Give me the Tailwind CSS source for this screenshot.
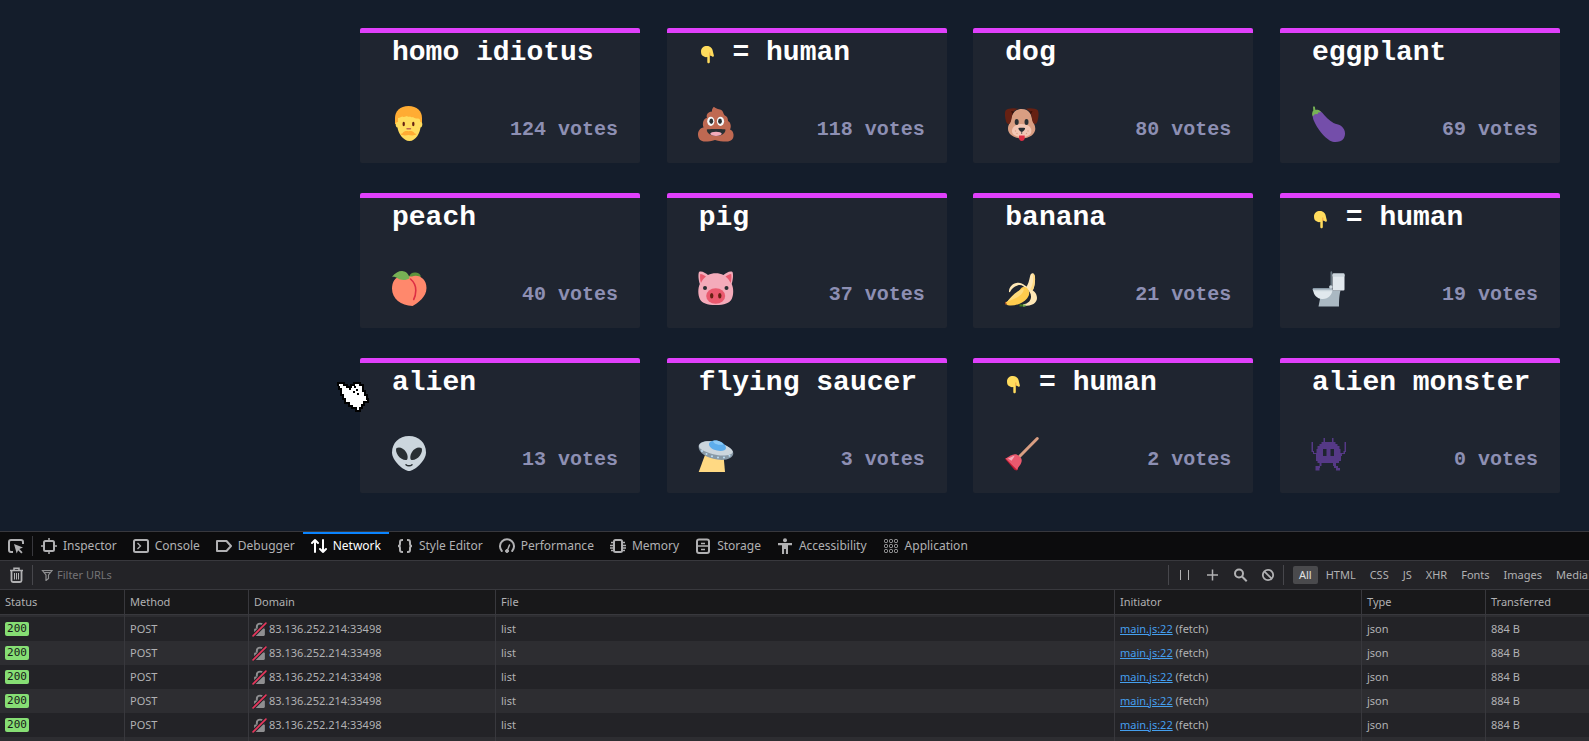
<!DOCTYPE html>
<html lang="en">
<head>
<meta charset="utf-8">
<title>Votes</title>
<script src="https://cdn.jsdelivr.net/npm/@tailwindcss/browser@4"></script>
</head>
<body class="flex h-screen flex-col overflow-hidden bg-[#141d2b] font-['Noto_Sans',sans-serif]">
<svg class="hidden" aria-hidden="true">
  <symbol id="point" viewBox="0 0 17 18" overflow="visible">
    <path fill="#ffdc5d" d="M8 0C4.500 0 2 2 2 5.500c0 2.500.7 4.500 3 5 .8.700 2 .8 3.300.6V16c0 1.700 2.500 1.700 2.500 0V9.500l1.700.4c.6 1.300 2.500 1 2.400-.5L14 6c-.4-3.500-2.500-6-6-6z"/>
    <path fill="none" stroke="#ef9645" stroke-width=".8" d="M10.800 10V6.500"/>
  </symbol>
  <symbol id="lock" viewBox="0 0 14 14">
    <path d="M4.500 6V4.500a3 3 0 0 1 6 0V6" fill="none" stroke="#8f8f91" stroke-width="1.800"/>
    <rect x="2" y="6" width="10" height="7" rx="1" fill="#8f8f91"/>
    <path d="M1 13 13 1" stroke="#232327" stroke-width="3.500"/>
    <path d="M1 13 13 1" stroke="#e8365c" stroke-width="1.500" stroke-linecap="round"/>
  </symbol>
</svg>

<main class="min-h-0 flex-1 overflow-hidden pt-7 pr-[29px]">
  <div class="relative ml-auto grid w-full max-w-[1200px] grid-cols-[repeat(4,280px)] justify-between gap-y-[30px] font-['Liberation_Mono',monospace]">

    <article class="flex h-[135px] flex-col justify-between rounded-xs border-t-[5px] border-[#e040fb] bg-[#1f2530] pt-1 pr-[22px] pb-[21px] pl-8">
      <h2 class="text-[28px] leading-8 font-bold whitespace-nowrap text-white">homo idiotus</h2>
      <div class="flex items-end justify-between">
        <svg class="size-9 overflow-visible" viewBox="0 0 36 36">
          <path fill="#ffac33" d="M16.500 0C8 0 3 5 3 12v6h27v-6C30 5 25 0 16.500 0z"/>
          <path fill="#ffdc5d" d="M6 12c2-.5 3-1 4-1.500 2 1 4 0 5-.5 1 1 2 1 3 .5 1 1 2 .7 3 .5 1 1 3 1.500 5 1.500 1.500 0 2.300 1 2.300 3.500 2.700-.5 2.700 5 .2 5.500-.5 5-4.500 13.500-11 13.500S6 26.500 5.500 21.500C3 21 3 15.500 6 16z"/>
          <ellipse cx="11.700" cy="18" rx="1.200" ry="2.200" fill="#662113"/><ellipse cx="21.300" cy="18" rx="1.200" ry="2.200" fill="#662113"/>
          <path d="M15 22.700h3.500" stroke="#c1694f" stroke-width="1.400" stroke-linecap="round"/>
          <path fill="#ffac33" d="M16.500 25.300c1-.8 5-.5 5.500 1.200.4 1 1.700 1.300 2.500 1.600-1.500 1.600-5 1.700-8 .9-3 .8-6.500.7-8-.9.8-.3 2.100-.6 2.500-1.600.5-1.700 4.500-2 5.500-1.200z"/>
        </svg>
        <span class="mb-[2px] text-xl leading-5 font-bold text-[#8d8fb3]">124 votes</span>
      </div>
    </article>

    <article class="flex h-[135px] flex-col justify-between rounded-xs border-t-[5px] border-[#e040fb] bg-[#1f2530] pt-1 pr-[22px] pb-[21px] pl-8">
      <h2 class="flex items-center text-[28px] leading-8 font-bold whitespace-pre text-white"><svg class="mt-1 h-[18px] w-[17px]"><use href="#point"/></svg> = human</h2>
      <div class="flex items-end justify-between">
        <svg class="size-9 overflow-visible" viewBox="0 0 36 36">
          <path fill="#bf6952" d="M31 23.500c1.500-2.500 1-7-2-8.500 0-3-1-4.500-2.700-5.200C24 9 25 4.500 21 3.500 18 3 15.500 1.500 15 .7c-1 1-2.500 2.500-2 4.800C8.500 6 7 9 8 12c-3.500.5-5 5-3.500 9.500C1 22-1 25-1 28.500-1 33 2 35.500 6 35.500c4 0 6 0 10-1.500 4 1.500 7 1.500 11.500 1.500S35 33 34.500 28.500c-.2-2.500-1.500-4.500-3.500-5z"/>
          <ellipse cx="11.800" cy="15.300" rx="3.600" ry="4.600" fill="#f5f8fa"/><ellipse cx="21.500" cy="15.300" rx="3.600" ry="4.600" fill="#f5f8fa"/>
          <ellipse cx="12.300" cy="15.300" rx="1.900" ry="2.700" fill="#292f33"/><ellipse cx="21" cy="15.300" rx="1.900" ry="2.700" fill="#292f33"/>
          <path fill="#292f33" d="M7.800 23.500c0-.7 18.700-.7 18.700 0 0 4-4 6.500-9.200 6.500s-9.500-2.500-9.500-6.500z"/>
          <ellipse cx="17" cy="27.800" rx="5.700" ry="2.100" fill="#f4abba"/>
        </svg>
        <span class="mb-[2px] text-xl leading-5 font-bold text-[#8d8fb3]">118 votes</span>
      </div>
    </article>

    <article class="flex h-[135px] flex-col justify-between rounded-xs border-t-[5px] border-[#e040fb] bg-[#1f2530] pt-1 pr-[22px] pb-[21px] pl-8">
      <h2 class="text-[28px] leading-8 font-bold whitespace-nowrap text-white">dog</h2>
      <div class="flex items-end justify-between">
        <svg class="size-9 overflow-visible" viewBox="0 0 36 36">
          <path fill="#d99e82" d="M16.700 3C9 3 7 9 5.500 15c-1 3-2.500 4-2.500 8 0 5 6 9.500 13.700 9.500S30.300 28 30.300 23c0-4-1.500-5-2.500-8C26.500 9 24.500 3 16.700 3z"/>
          <path fill="#f2c6b4" d="M16.700 18c-6 0-9.700 3-9.700 7s4.500 6 9.700 6 9.700-2 9.700-6-3.500-7-9.700-7z"/>
          <path fill="#662113" d="M13 2.700C8 1.500 3 2.300 1 4-.7 6 0 11 .7 14c.7 3.500 2.300 5 4 3.500C7 15 6.500 10 8 6.500c1-2 3-3 5-3.800zM20.500 2.700c5-1.200 10-.4 12 1.300 1.700 2 1 7 .3 10-.7 3.500-2.300 5-4 3.500-2.300-2.500-1.800-7.500-3.300-11-1-2-3-3-5-3.800z"/>
          <path fill="#3b0f08" d="M6 5l3 .5L7.500 8zM27.500 5l-3 .5L26 8z"/>
          <ellipse cx="11.700" cy="16" rx="2" ry="3" fill="#292f33"/><ellipse cx="21.500" cy="16" rx="2" ry="3" fill="#292f33"/>
          <path fill="#292f33" d="M13.500 22c1.500-.5 5-.5 6.500 0 .5 1.500-2 3.800-3.300 3.800S13 23.500 13.500 22z"/>
          <path fill="#dd2e44" d="M14 29.500h5.700V32c0 4-5.700 4-5.700 0z"/><path d="M16.700 25v3" stroke="#292f33" stroke-width=".7"/>
          <g fill="#d99e82"><circle cx="10.500" cy="25" r=".7"/><circle cx="12" cy="27.500" r=".7"/><circle cx="23" cy="25" r=".7"/><circle cx="21.500" cy="27.500" r=".7"/></g>
        </svg>
        <span class="mb-[2px] text-xl leading-5 font-bold text-[#8d8fb3]">80 votes</span>
      </div>
    </article>

    <article class="flex h-[135px] flex-col justify-between rounded-xs border-t-[5px] border-[#e040fb] bg-[#1f2530] pt-1 pr-[22px] pb-[21px] pl-8">
      <h2 class="text-[28px] leading-8 font-bold whitespace-nowrap text-white">eggplant</h2>
      <div class="flex items-end justify-between">
        <svg class="size-9 overflow-visible" viewBox="0 0 36 36">
          <path fill="#744eaa" d="M3 5.500C0 8 .5 12 2 15c3.500 8 10 16 16 19.700 4.500 2.500 11 1.300 13.500-2 3-4 1.500-10.500-3-13.200-2-1.300-4.500-1-7-2.500C17 14.500 13 10 10.500 7 8.500 4.500 5.500 3.500 3 5.500z"/>
          <path fill="#77b255" d="M1 .8c1-.8 2.200-.3 2 .7l.3 2.300c2-.3 4.500 0 5.700 2.200-1 .5-1.800.5-2.500.3C6 8 5 8.700 4.500 8 3 7.800 2.300 8.500.7 10.500-.5 8.500.3 5.500 1.300 4.500z"/>
        </svg>
        <span class="mb-[2px] text-xl leading-5 font-bold text-[#8d8fb3]">69 votes</span>
      </div>
    </article>

    <article class="flex h-[135px] flex-col justify-between rounded-xs border-t-[5px] border-[#e040fb] bg-[#1f2530] pt-1 pr-[22px] pb-[21px] pl-8">
      <h2 class="text-[28px] leading-8 font-bold whitespace-nowrap text-white">peach</h2>
      <div class="flex items-end justify-between">
        <svg class="size-9 overflow-visible" viewBox="0 0 36 36">
          <path fill="#5c913b" d="M17 6c1-4 4-5 7-4.500 3 .3 4 2 5 4l-5 2z"/>
          <path fill="#ff886c" d="M20 5.500c7-2.500 14.500 2.500 14.500 11.500C34.500 26 26 32 20.500 35 9 34.500 0 28 0 17.500 0 11 3 6 9 5.200c4-.6 8 .2 11 .3z"/>
          <path fill="none" stroke="#dd2e44" stroke-width="1.600" stroke-linecap="round" d="M18.500 8c3.500 3 5.500 7 5.300 11.500-.1 3.500-1 7-2.100 9"/>
          <path fill="#77b255" d="M0 5.800C3.500 1.500 7.500-.3 11 .2c4 .5 6 3.500 6.500 7C14.500 9.500 9 9.500 6 7.500 4 6 2 5.500 0 5.800z"/>
        </svg>
        <span class="mb-[2px] text-xl leading-5 font-bold text-[#8d8fb3]">40 votes</span>
      </div>
    </article>

    <article class="flex h-[135px] flex-col justify-between rounded-xs border-t-[5px] border-[#e040fb] bg-[#1f2530] pt-1 pr-[22px] pb-[21px] pl-8">
      <h2 class="text-[28px] leading-8 font-bold whitespace-nowrap text-white">pig</h2>
      <div class="flex items-end justify-between">
        <svg class="size-9 overflow-visible" viewBox="0 0 36 36">
          <path fill="#f4abba" d="M0 1C2.500-.5 6.500 2 9 4c4.500-2.500 11-2.500 15.500 0C27 2 31-.5 33.500 1c1 2.500.5 8-.8 12 2 4 2 11 0 15-2.200 4-7.200 6-16 6S3 32 .8 28c-2-4-2-11 0-15C-.5 9-1 3.500 0 1z"/>
          <path fill="#ea596e" d="M1.300 3C3.500 3 5.500 4.500 7 5.500 4.500 7.500 3 9.500 2 12 1 9 .8 5.500 1.300 3zM32.200 3c-2.200 0-4.200 1.500-5.700 2.500 2.500 2 4 4 5 6.500 1-3 1.200-6.500.7-9z"/>
          <circle cx="6" cy="17" r="2" fill="#292f33"/><circle cx="27.500" cy="17" r="2" fill="#292f33"/>
          <ellipse cx="16.700" cy="25" rx="9.500" ry="7.700" fill="#ea596e"/>
          <ellipse cx="12.700" cy="24.700" rx="1.700" ry="2.700" fill="#662113"/><ellipse cx="20.800" cy="24.700" rx="1.700" ry="2.700" fill="#662113"/>
        </svg>
        <span class="mb-[2px] text-xl leading-5 font-bold text-[#8d8fb3]">37 votes</span>
      </div>
    </article>

    <article class="flex h-[135px] flex-col justify-between rounded-xs border-t-[5px] border-[#e040fb] bg-[#1f2530] pt-1 pr-[22px] pb-[21px] pl-8">
      <h2 class="text-[28px] leading-8 font-bold whitespace-nowrap text-white">banana</h2>
      <div class="flex items-end justify-between">
        <svg class="size-9 overflow-visible" viewBox="0 0 36 36">
          <path fill="#ffe8b6" d="M20.500 17c3-3.500 3.500-7.500 4.500-11.500.5-2.500 1.500-3.500 3-3.300C30.500 3 30.500 9 29.500 14c-.5 3-1.500 5-3 7z"/>
          <path fill="#ffd983" d="M27.500 2.500C30.500 3 30.500 9 29.500 14c-.5 3-1.500 5-3 7l-2-1.500C28 14.500 29 8 27.500 2.500z"/>
          <path fill="#ffe8b6" d="M21 18c-2-3-5-5-8.500-3.500C9 15.500 6.500 18 5 21l-1 .3c-.5-5 4-9.800 9.500-9.500 4.500.3 8.500 4 10 6.200 4.500.5 8.500 4 8.500 9 0 5-5 8-13 8l-1-1.500c5.500-1 8-4 8-8 0-3.500-2-6-5.500-8z"/>
          <path fill="#ffcc4d" d="M21.500 16.500c3 2.500 4 7 .5 11-4 5-12 7.500-17.500 7-2.500-.2-4.200-1.500-4-3C4 29 8 27 11.500 23.500c3-2.500 4-8 7.500-7.500z"/>
          <path fill="#ffdc7d" d="M18.500 17.500c1 3-3 7.500-7.500 9.500-3 1.500-6.500 2.500-9 4 4-5.500 9.500-11 16.500-13.500z"/>
          <path fill="#a6502e" d="M.3 30.500l1.500 2.500-1 1C0 33-.3 31.500.3 30.500z"/><path fill="#3e721d" d="M14.500 33.200l3.500.3v2h-3.500z"/><path fill="#77b255" d="M18 33.500l3 .3-.5 1.700-2.500.2z"/>
        </svg>
        <span class="mb-[2px] text-xl leading-5 font-bold text-[#8d8fb3]">21 votes</span>
      </div>
    </article>

    <article class="flex h-[135px] flex-col justify-between rounded-xs border-t-[5px] border-[#e040fb] bg-[#1f2530] pt-1 pr-[22px] pb-[21px] pl-8">
      <h2 class="flex items-center text-[28px] leading-8 font-bold whitespace-pre text-white"><svg class="mt-1 h-[18px] w-[17px]"><use href="#point"/></svg> = human</h2>
      <div class="flex items-end justify-between">
        <svg class="size-9 overflow-visible" viewBox="0 0 36 36">
          <path fill="#66757f" d="M18.500 1c0-1 1.700-1 1.700 0v16h-1.700z"/>
          <path fill="#aab8c2" d="M20 19.500h8.500c-1 4-1.500 8-1.500 16H6.500l1.800-9z"/>
          <rect x="20.500" y="3.500" width="12" height="16" rx="1" fill="#e1e8ed"/><rect x="20.500" y="2.300" width="12" height="3.500" rx="1" fill="#ccd6dd"/>
          <path fill="#e1e8ed" d="M1.200 19H20c1 4-4 9.500-10 9C5 27.700 1.500 24 1.200 19z"/>
          <path fill="#8899a6" d="M1.500 17H20v2H.8c-.5-1 0-2 .7-2z"/><path fill="#ccd6dd" d="M.7 18.500h20v1.700H1.200z"/>
          <circle cx="18.800" cy="16" r="1.700" fill="#ccd6dd"/>
        </svg>
        <span class="mb-[2px] text-xl leading-5 font-bold text-[#8d8fb3]">19 votes</span>
      </div>
    </article>

    <article class="flex h-[135px] flex-col justify-between rounded-xs border-t-[5px] border-[#e040fb] bg-[#1f2530] pt-1 pr-[22px] pb-[21px] pl-8">
      <h2 class="text-[28px] leading-8 font-bold whitespace-nowrap text-white">alien</h2>
      <div class="flex items-end justify-between">
        <svg class="size-9 overflow-visible" viewBox="0 0 36 36">
          <path fill="#ccd6dd" d="M17 0C7 0 0 7 0 16.500 0 25 12 35 17 35s17-10 17-18.500C34 7 27 0 17 0z"/>
          <path fill="#292f33" d="M4.500 12c3-1.500 7 0 9.500 4 2 3 2 6.500 1 7.700-2.500.8-6.500-.7-9-4.200-2-3-2.500-6-1.500-7.500zM29.500 12c-3-1.500-7 0-9.500 4-2 3-2 6.500-1 7.700 2.500.8 6.500-.7 9-4.200 2-3 2.500-6 1.500-7.500z"/>
          <path fill="none" stroke="#292f33" stroke-width="1.500" stroke-linecap="round" d="M14 28.700c1.500 1.500 4.500 1.500 6 0"/>
        </svg>
        <span class="mb-[2px] text-xl leading-5 font-bold text-[#8d8fb3]">13 votes</span>
      </div>
    </article>

    <article class="flex h-[135px] flex-col justify-between rounded-xs border-t-[5px] border-[#e040fb] bg-[#1f2530] pt-1 pr-[22px] pb-[21px] pl-8">
      <h2 class="text-[28px] leading-8 font-bold whitespace-nowrap text-white">flying saucer</h2>
      <div class="flex items-end justify-between">
        <svg class="size-9 overflow-visible" viewBox="0 0 36 36">
          <path fill="#ffd983" d="M6 19h18.500L26 36H-.3z"/>
          <path fill="#8899a6" d="M-.4 10C0 6 7 4 15 5.500S34 12 34.300 17c.2 5-7 8-16 6.500C8 22-1 17-.4 10z"/>
          <path fill="#ccd6dd" d="M0 10C.5 6 7.500 4.300 15.500 5.700S33.500 12 33.800 15.500C34 19 26 20.500 18 19 8 17-.5 13 0 10z"/>
          <path fill="#5dadec" d="M10 7.500c1-2.500 5-3.500 9-2.500 4.500 1 8 4 8 7 0 2.500-4.500 3.500-9 2.500-5-1-8.500-4-8-7z"/><path fill="#8ccaf7" d="M14 5c4-1.500 9 1 10.500 3.500C21 9.500 15 8.500 14 5z"/>
          <g fill="#bbddf5"><circle cx="3" cy="15" r="1"/><circle cx="7.500" cy="18" r="1"/><circle cx="13" cy="20.300" r="1"/><circle cx="19" cy="21.500" r="1"/><circle cx="25" cy="21.500" r="1"/><circle cx="30.500" cy="19.700" r="1"/></g>
        </svg>
        <span class="mb-[2px] text-xl leading-5 font-bold text-[#8d8fb3]">3 votes</span>
      </div>
    </article>

    <article class="flex h-[135px] flex-col justify-between rounded-xs border-t-[5px] border-[#e040fb] bg-[#1f2530] pt-1 pr-[22px] pb-[21px] pl-8">
      <h2 class="flex items-center text-[28px] leading-8 font-bold whitespace-pre text-white"><svg class="mt-1 h-[18px] w-[17px]"><use href="#point"/></svg> = human</h2>
      <div class="flex items-end justify-between">
        <svg class="size-9 overflow-visible" viewBox="0 0 36 36">
          <path stroke="#d99e82" stroke-width="3" stroke-linecap="round" d="M14.500 20.500 32.300 2.500"/>
          <path fill="#be1931" d="M0 22.800 1.500 22 13 32.500 12 34.500 9.700 34z"/>
          <path fill="#ea596e" d="M.5 22.500C4 21 5 19 9 18.500c1.500-.7 3 0 4 .8l3 2.700c1 1.500.7 2.700.5 4-.8 3.500-3.500 4.500-4.300 8z"/>
          <path fill="#f4abba" d="M3 22.500c3-1 4-2.500 6.500-2.800-.5 1.500-1.500 3-3 5z"/>
        </svg>
        <span class="mb-[2px] text-xl leading-5 font-bold text-[#8d8fb3]">2 votes</span>
      </div>
    </article>

    <article class="flex h-[135px] flex-col justify-between rounded-xs border-t-[5px] border-[#e040fb] bg-[#1f2530] pt-1 pr-[22px] pb-[21px] pl-8">
      <h2 class="text-[28px] leading-8 font-bold whitespace-nowrap text-white">alien monster</h2>
      <div class="flex items-end justify-between">
        <svg class="size-9 overflow-visible" viewBox="0 0 36 36">
          <path fill="#553986" fill-rule="evenodd" d="M11.500 2H13v4h7V2h1.500v4h2v2h2v2h2v3h1v4h3v-2h1V6H34v10h-1v2h-3v2h-1v5h-2v2h-3v3h2v2h2v2.500h-4V32h-2v-2h-1.500v-3h-11v3H8v2h-.500v2.500h-4V30h4v-3h-2v-2h-1.500v-7h-3v-2h-1.500V6H1v9h1v2h2.500v-4h1v-3h2V8h2V6h2zM11 13h3.500v7H11zM18.500 13H22v7h-3.500z"/>
          <path fill="#1f2530" d="M12 27h9v3h-9z"/>
        </svg>
        <span class="mb-[2px] text-xl leading-5 font-bold text-[#8d8fb3]">0 votes</span>
      </div>
    </article>

    <svg class="absolute top-[353px] -left-[23px] h-[31px] w-8" viewBox="0 0 32 31" shape-rendering="crispEdges" aria-hidden="true">
      <path fill="#fff" stroke="#000" stroke-width="2" d="M1 2h6v2h3v2h4V4h3V2h6v2h3v6h2v4h2v4h1v3h-4v3h-2v3h-2v3h-4v-3h-4v-2h-3v-3H8v-4H6v-4H4V8H2z"/>
      <path fill="#000" d="M12 7h2v2h-2zM17 5h2v2h-2zM19 8h2v2h-2zM20 12h2v2h-2zM16 10h2v2h-2z"/>
    </svg>
  </div>
</main>

<section class="flex h-[210px] shrink-0 flex-col overflow-hidden border-t border-[#38383d] bg-[#232327] text-[#b1b1b3]">
  <nav class="flex h-7 shrink-0 box-content border-b border-[#38383d] bg-[#0c0c0d] text-xs">
    <button class="flex w-8 items-center justify-center" aria-label="Pick an element"><svg class="size-4" viewBox="0 0 16 16" fill="none" stroke="currentColor" stroke-width="2"><path d="M5 14H3a2 2 0 0 1-2-2V4a2 2 0 0 1 2-2h10a2 2 0 0 1 2 2v2"/><path d="M6 6l9 3.500-3.600 1.400 3.200 3.300-1.300 1.300-3.200-3.300L8.700 15.500z" fill="currentColor" stroke="none"/></svg></button>
    <span class="my-1 w-px bg-[#38383d]"></span>
    <button class="flex items-center gap-[6px] px-2"><svg class="size-4" viewBox="0 0 16 16" fill="none" stroke="currentColor"><rect x="3" y="3" width="10" height="10" rx="1.500" stroke-width="2"/><path d="M8 0v3M8 13v3M0 8h3M13 8h3" stroke-width="1.500"/></svg>Inspector</button>
    <button class="flex items-center gap-[6px] px-2"><svg class="size-4" viewBox="0 0 16 16" fill="none" stroke="currentColor"><rect x="1" y="2" width="14" height="12" rx="1.500" stroke-width="2"/><path d="M4.500 5 7.500 8l-3 3" stroke-width="1.300"/></svg>Console</button>
    <button class="flex items-center gap-[6px] px-2"><svg class="size-4" viewBox="0 0 16 16" fill="none" stroke="currentColor" stroke-width="2" stroke-linejoin="round"><path d="M1 3h9.500L15 8l-4.500 5H1z"/></svg>Debugger</button>
    <button class="flex items-center gap-[6px] px-2 text-white shadow-[inset_0_2px_#0a84ff]"><svg class="size-4" viewBox="0 0 16 16" fill="none" stroke="currentColor" stroke-width="2" stroke-linecap="round" stroke-linejoin="round"><path d="M4 14V2M1 5l3-3 3 3M12 2v12M9 11l3 3 3-3"/></svg>Network</button>
    <button class="flex items-center gap-[6px] px-2"><svg class="size-4" viewBox="0 0 16 16" fill="none" stroke="currentColor" stroke-width="2"><path d="M6 2H5C3.500 2 3 3 3 4v2c0 1-.7 2-2 2 1.300 0 2 1 2 2v2c0 1 .5 2 2 2h1M10 2h1c1.500 0 2 1 2 2v2c0 1 .7 2 2 2-1.300 0-2 1-2 2v2c0 1-.5 2-2 2h-1"/></svg>Style Editor</button>
    <button class="flex items-center gap-[6px] px-2"><svg class="size-4" viewBox="0 0 16 16" fill="none" stroke="currentColor" stroke-width="2" stroke-linecap="round"><path d="M2.800 13A7 7 0 1 1 13.200 13"/><path d="M8.300 12.500 10.500 7" stroke-width="1.500"/><circle cx="8" cy="13" r="1.500" fill="currentColor" stroke-width="1"/></svg>Performance</button>
    <button class="flex items-center gap-[6px] px-2"><svg class="size-4" viewBox="0 0 16 16" fill="none" stroke="currentColor"><rect x="4" y="2" width="8" height="12" rx="1.500" stroke-width="2"/><path d="M1 4.500h2.500M0 7.500h3M0 10h3M1 12.500h2.500M12.500 4.500H15M13 7.500h3M13 10h3M12.500 12.500H15" stroke-width="1.300"/></svg>Memory</button>
    <button class="flex items-center gap-[6px] px-2"><svg class="size-4" viewBox="0 0 16 16" fill="none" stroke="currentColor"><rect x="2" y="1.500" width="12" height="13.500" rx="2" stroke-width="2"/><path d="M2 8h12M6 5.500h4M6 11.500h4" stroke-width="1.300"/></svg>Storage</button>
    <button class="flex items-center gap-[6px] px-2"><svg class="size-4" viewBox="0 0 16 16" fill="currentColor"><circle cx="8" cy="2.200" r="2"/><path d="M1 5h14v2.200h-4V16H8.900v-5H7.100v5H5V7.200H1z"/></svg>Accessibility</button>
    <button class="flex items-center gap-[6px] px-2"><svg class="size-4" viewBox="0 0 16 16" fill="none" stroke="currentColor"><g id="dots"><rect x="1.500" y="1.500" width="3" height="3" rx="1"/><rect x="6.500" y="1.500" width="3" height="3" rx="1"/><rect x="11.500" y="1.500" width="3" height="3" rx="1"/></g><use href="#dots" y="5"/><use href="#dots" y="10"/></svg>Application</button>
  </nav>

  <div class="flex h-7 shrink-0 box-content border-b border-[#38383d] text-[11px]">
    <button class="flex w-8 items-center justify-center" aria-label="Clear"><svg class="size-4" viewBox="0 0 16 16" fill="none" stroke="currentColor"><path d="M3.500 4v9.500c0 1 .7 1.500 1.500 1.500h7c.8 0 1.500-.5 1.500-1.500V4" stroke-width="1.800"/><path d="M2 3.500h13M6 3V1.200h5V3" stroke-width="1.500"/><path d="M6.500 6v6.500M8.500 6v6.500M10.500 6v6.500"/></svg></button>
    <span class="my-1 w-px bg-[#47474c]"></span>
    <label class="flex min-w-0 flex-1 items-center gap-1 pl-2"><svg class="size-3" viewBox="0 0 12 12" fill="none" stroke="#8f8f91" stroke-width="1.200"><path d="M1.500 1.500h9.500L7.500 6v3.500l-2.500 2V6z"/><path d="M3 3.500h6"/></svg><input class="min-w-0 flex-1 bg-transparent outline-none placeholder:text-[#737376]" placeholder="Filter URLs" aria-label="Filter URLs"></label>
    <div class="flex border-x border-[#47474c] my-1 px-px">
      <button class="flex w-7 items-center justify-center" aria-label="Pause"><svg class="size-4" viewBox="0 0 16 16" stroke="currentColor"><path d="M4.500 3v10M12.500 3v10"/></svg></button>
      <button class="flex w-7 items-center justify-center" aria-label="New request"><svg class="size-4" viewBox="0 0 16 16" stroke="currentColor" stroke-width="1.500"><path d="M8.500 2.500v11M3 8h11"/></svg></button>
      <button class="flex w-7 items-center justify-center" aria-label="Search"><svg class="size-4" viewBox="0 0 16 16" fill="none" stroke="currentColor" stroke-width="2"><circle cx="7" cy="6.500" r="4"/><path d="M10 9.500l4.700 4.700"/></svg></button>
      <button class="flex w-7 items-center justify-center" aria-label="Block"><svg class="size-4" viewBox="0 0 16 16" fill="none" stroke="currentColor" stroke-width="1.800"><circle cx="8" cy="8" r="5.200"/><path d="M4.300 4.300l7.400 7.400"/></svg></button>
    </div>
    <div class="-mr-[5px] ml-[9px] flex items-center gap-[2px]">
      <button class="h-[18px] rounded-xs bg-[#4a4a4d] px-[6px] text-[#e0e0e2]">All</button>
      <button class="h-[18px] px-[6px]">HTML</button>
      <button class="h-[18px] px-[6px]">CSS</button>
      <button class="h-[18px] px-[6px]">JS</button>
      <button class="h-[18px] px-[6px]">XHR</button>
      <button class="h-[18px] px-[6px]">Fonts</button>
      <button class="h-[18px] px-[6px]">Images</button>
      <button class="h-[18px] px-[6px]">Media</button>
    </div>
  </div>

  <div class="min-h-0 flex-1 overflow-hidden">
    <table class="w-full table-fixed border-separate border-spacing-0 text-left text-[11px] whitespace-nowrap [&_td:not(:last-child)]:border-r [&_td]:border-[#38383d] [&_td]:px-[5px] [&_td]:py-0 [&_th:not(:last-child)]:border-r [&_th]:border-b [&_th]:border-[#38383d] [&_th]:px-[5px] [&_th]:font-normal">
      <thead><tr class="h-[25px] bg-[#18181a]"><th class="w-[125px]">Status</th><th class="w-[124px]">Method</th><th class="w-[247px]">Domain</th><th>File</th><th class="w-[247px]">Initiator</th><th class="w-[124px]">Type</th><th class="w-[103px]">Transferred</th></tr></thead>
      <tbody>
        <tr class="h-[2px] bg-[#2d2d31]" aria-hidden="true"><td></td><td></td><td></td><td></td><td></td><td></td><td></td></tr>
        <tr class="h-6"><td><span class="block h-[14px] w-6 rounded-xs bg-[#86de74] text-center font-['DejaVu_Sans_Mono',monospace] leading-[14px] text-[#18181a]">200</span></td><td>POST</td><td><span class="flex items-center gap-[2px]"><svg class="-ml-[2px] size-[15px]"><use href="#lock"/></svg>83.136.252.214:33498</span></td><td>list</td><td><a href="#" class="text-[#459fee] underline">main.js:22</a> (fetch)</td><td>json</td><td>884 B</td></tr>
        <tr class="h-6 bg-[#2d2d31]"><td><span class="block h-[14px] w-6 rounded-xs bg-[#86de74] text-center font-['DejaVu_Sans_Mono',monospace] leading-[14px] text-[#18181a]">200</span></td><td>POST</td><td><span class="flex items-center gap-[2px]"><svg class="-ml-[2px] size-[15px]"><use href="#lock"/></svg>83.136.252.214:33498</span></td><td>list</td><td><a href="#" class="text-[#459fee] underline">main.js:22</a> (fetch)</td><td>json</td><td>884 B</td></tr>
        <tr class="h-6"><td><span class="block h-[14px] w-6 rounded-xs bg-[#86de74] text-center font-['DejaVu_Sans_Mono',monospace] leading-[14px] text-[#18181a]">200</span></td><td>POST</td><td><span class="flex items-center gap-[2px]"><svg class="-ml-[2px] size-[15px]"><use href="#lock"/></svg>83.136.252.214:33498</span></td><td>list</td><td><a href="#" class="text-[#459fee] underline">main.js:22</a> (fetch)</td><td>json</td><td>884 B</td></tr>
        <tr class="h-6 bg-[#2d2d31]"><td><span class="block h-[14px] w-6 rounded-xs bg-[#86de74] text-center font-['DejaVu_Sans_Mono',monospace] leading-[14px] text-[#18181a]">200</span></td><td>POST</td><td><span class="flex items-center gap-[2px]"><svg class="-ml-[2px] size-[15px]"><use href="#lock"/></svg>83.136.252.214:33498</span></td><td>list</td><td><a href="#" class="text-[#459fee] underline">main.js:22</a> (fetch)</td><td>json</td><td>884 B</td></tr>
        <tr class="h-6"><td><span class="block h-[14px] w-6 rounded-xs bg-[#86de74] text-center font-['DejaVu_Sans_Mono',monospace] leading-[14px] text-[#18181a]">200</span></td><td>POST</td><td><span class="flex items-center gap-[2px]"><svg class="-ml-[2px] size-[15px]"><use href="#lock"/></svg>83.136.252.214:33498</span></td><td>list</td><td><a href="#" class="text-[#459fee] underline">main.js:22</a> (fetch)</td><td>json</td><td>884 B</td></tr>
        <tr class="h-6 bg-[#2d2d31]" aria-hidden="true"><td></td><td></td><td></td><td></td><td></td><td></td><td></td></tr>
      </tbody>
    </table>
  </div>
</section>
</body>
</html>
